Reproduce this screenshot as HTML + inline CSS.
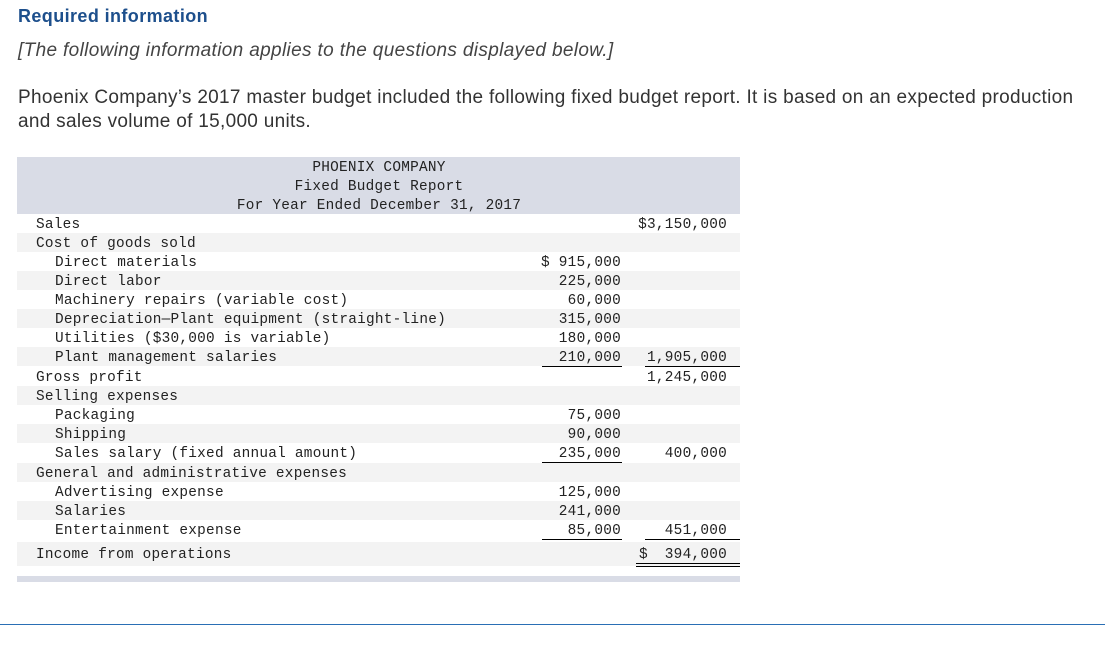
<!DOCTYPE html>
<html><head><meta charset="utf-8"><style>
body{margin:0;width:1105px;height:646px;background:#fff;position:relative;overflow:hidden;font-family:"Liberation Sans",sans-serif;color:#333}
.a{position:absolute;white-space:nowrap}
.m{font-family:"Liberation Mono",monospace;font-size:14.4px;letter-spacing:0.25px;color:#222}
.r{text-align:right}
.g{position:absolute;left:17px;width:723px;height:19px;background:#f3f3f3}
.u{position:absolute;height:1px;background:#000}
.h{position:absolute;left:0;width:724px;text-align:center}
</style></head><body>
<div class="a" style="left:18px;top:6px;font-size:18px;font-weight:bold;color:#1d4f8c;letter-spacing:0.4px">Required information</div>
<div class="a" style="left:18px;top:40px;font-size:19px;font-style:italic;color:#444;letter-spacing:0.35px">[The following information applies to the questions displayed below.]</div>
<div class="a" style="left:18px;top:87px;font-size:19px;color:#333;letter-spacing:0.3px">Phoenix Company’s 2017 master budget included the following fixed budget report. It is based on an expected production</div>
<div class="a" style="left:18px;top:111px;font-size:19px;color:#333;letter-spacing:0.3px">and sales volume of 15,000 units.</div>

<div style="position:absolute;left:17px;top:157px;width:723px;height:57px;background:#d9dce6"></div>
<div class="a m h" style="top:160px;left:17px">PHOENIX COMPANY</div>
<div class="a m h" style="top:179px;left:17px">Fixed Budget Report</div>
<div class="a m h" style="top:198px;left:17px">For Year Ended December 31, 2017</div>

<div class="g" style="top:233px"></div>
<div class="g" style="top:271px"></div>
<div class="g" style="top:309px"></div>
<div class="g" style="top:347px"></div>
<div class="g" style="top:386px"></div>
<div class="g" style="top:424px"></div>
<div class="g" style="top:463px"></div>
<div class="g" style="top:501px"></div>
<div class="g" style="top:542px;height:24px"></div>
<div style="position:absolute;left:17px;top:576px;width:723px;height:6px;background:#d9dce6"></div>

<div class="a m" style="left:36px;top:217px">Sales</div>
<div class="a m" style="left:36px;top:236px">Cost of goods sold</div>
<div class="a m" style="left:55px;top:255px">Direct materials</div>
<div class="a m" style="left:55px;top:274px">Direct labor</div>
<div class="a m" style="left:55px;top:293px">Machinery repairs (variable cost)</div>
<div class="a m" style="left:55px;top:312px">Depreciation—Plant equipment (straight-line)</div>
<div class="a m" style="left:55px;top:331px">Utilities ($30,000 is variable)</div>
<div class="a m" style="left:55px;top:350px">Plant management salaries</div>
<div class="a m" style="left:36px;top:370px">Gross profit</div>
<div class="a m" style="left:36px;top:389px">Selling expenses</div>
<div class="a m" style="left:55px;top:408px">Packaging</div>
<div class="a m" style="left:55px;top:427px">Shipping</div>
<div class="a m" style="left:55px;top:446px">Sales salary (fixed annual amount)</div>
<div class="a m" style="left:36px;top:466px">General and administrative expenses</div>
<div class="a m" style="left:55px;top:485px">Advertising expense</div>
<div class="a m" style="left:55px;top:504px">Salaries</div>
<div class="a m" style="left:55px;top:523px">Entertainment expense</div>
<div class="a m" style="left:36px;top:547px">Income from operations</div>

<div class="a m r" style="left:600px;width:127px;top:217px">$3,150,000</div>
<div class="a m r" style="left:500px;width:121px;top:255px">$ 915,000</div>
<div class="a m r" style="left:500px;width:121px;top:274px">225,000</div>
<div class="a m r" style="left:500px;width:121px;top:293px">60,000</div>
<div class="a m r" style="left:500px;width:121px;top:312px">315,000</div>
<div class="a m r" style="left:500px;width:121px;top:331px">180,000</div>
<div class="a m r" style="left:500px;width:121px;top:350px">210,000</div>
<div class="a m r" style="left:600px;width:127px;top:350px">1,905,000</div>
<div class="a m r" style="left:600px;width:127px;top:370px">1,245,000</div>
<div class="a m r" style="left:500px;width:121px;top:408px">75,000</div>
<div class="a m r" style="left:500px;width:121px;top:427px">90,000</div>
<div class="a m r" style="left:500px;width:121px;top:446px">235,000</div>
<div class="a m r" style="left:600px;width:127px;top:446px">400,000</div>
<div class="a m r" style="left:500px;width:121px;top:485px">125,000</div>
<div class="a m r" style="left:500px;width:121px;top:504px">241,000</div>
<div class="a m r" style="left:500px;width:121px;top:523px">85,000</div>
<div class="a m r" style="left:600px;width:127px;top:523px">451,000</div>
<div class="a m" style="left:639px;top:547px">$</div>
<div class="a m r" style="left:600px;width:127px;top:547px">394,000</div>

<div class="u" style="left:542px;width:80px;top:366px"></div>
<div class="u" style="left:645px;width:95px;top:366px"></div>
<div class="u" style="left:542px;width:80px;top:462px"></div>
<div class="u" style="left:542px;width:80px;top:539px"></div>
<div class="u" style="left:645px;width:95px;top:539px"></div>
<div class="u" style="left:636px;width:104px;top:563px"></div>
<div class="u" style="left:636px;width:104px;top:566px"></div>

<div style="position:absolute;left:0;top:624px;width:1105px;height:1px;background:#2a6fb5"></div>
</body></html>
